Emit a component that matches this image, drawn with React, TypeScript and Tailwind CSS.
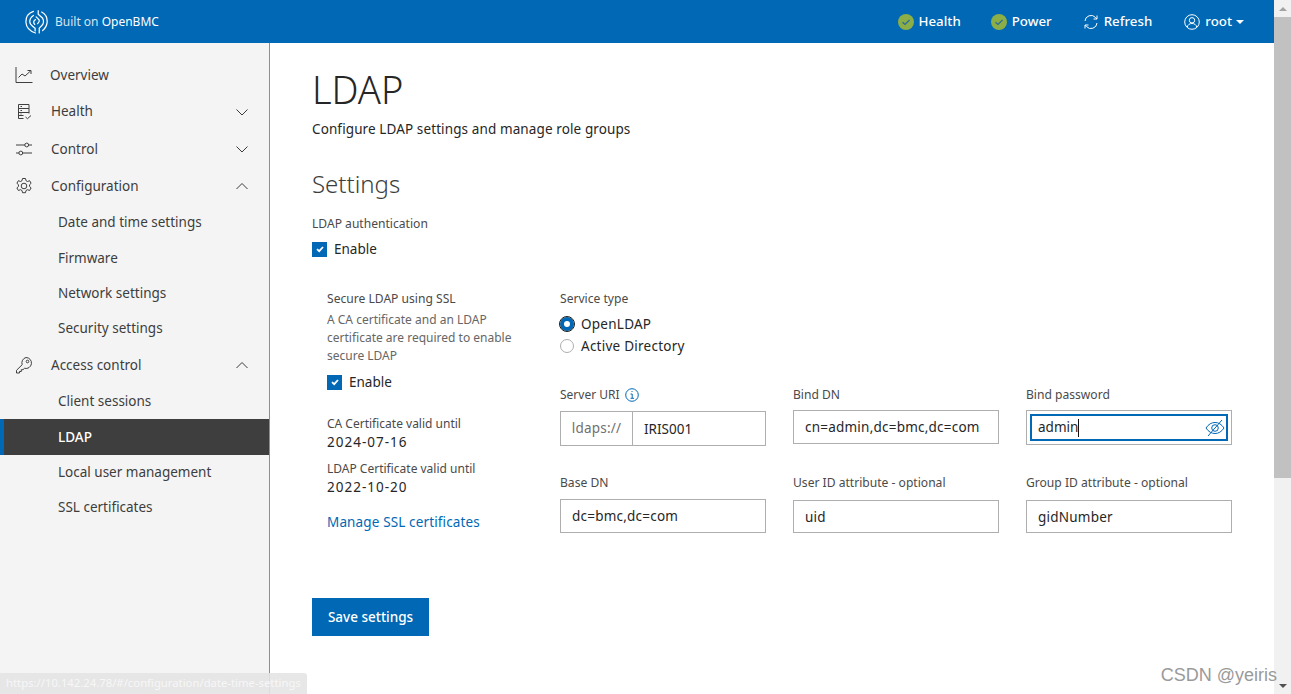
import React from "react";

const font = "font-['Noto_Sans',sans-serif]";

function Chevron({ up }: { up?: boolean }) {
  return (
    <svg width="16" height="16" viewBox="0 0 16 16" fill="none" stroke="#3b3b3b" strokeWidth="1">
      {up ? <path d="M2.500 11 8 5.500l5.500 5.500" /> : <path d="M2.500 5.500 8 11l5.500-5.500" />}
    </svg>
  );
}

const s = { fill: "none", stroke: "#3f3f3f", strokeWidth: 1 };

function IconOverview() {
  return (
    <svg width="18" height="18" viewBox="0 0 18 18" {...s}>
      <path d="M1 1v15.500h16.500" />
      <path d="M3.500 11.500l3.500-3.500 3 2 5.500-5" />
      <path d="M12.500 4.500h3.500v3.500" />
    </svg>
  );
}
function IconHealth() {
  return (
    <svg width="18" height="18" viewBox="0 0 18 18" {...s}>
      <path d="M8.500 15.500H3.500v-14h10.500v9" />
      <path d="M3.500 5.500h10.500M3.500 9.500h10.500M3.500 12.500h5" />
      <path d="M5.500 3.500h1.500M5.500 7.500h1.500M5.500 11h1" />
      <path d="M10.500 14l2 1.700 3.500-3.200" />
    </svg>
  );
}
function IconControl() {
  return (
    <svg width="18" height="18" viewBox="0 0 18 18" {...s}>
      <path d="M1 5h9M13.500 5H17M1 13h3M7.500 13H17" />
      <circle cx="11.700" cy="5" r="1.900" />
      <circle cx="5.800" cy="13" r="1.900" />
    </svg>
  );
}
function IconGear() {
  return (
    <svg width="18" height="18" viewBox="0 0 18 18" {...s}>
      <circle cx="9" cy="9" r="2.800" />
      <path d="M7.500 1.500h3l.5 2.200 1.500.8 2.100-.8 1.500 2.600-1.600 1.500v1.600l1.600 1.500-1.500 2.600-2.100-.8-1.500.8-.5 2.200h-3l-.5-2.200-1.500-.8-2.100.8-1.500-2.600 1.600-1.500V7.700L1.900 6.300l1.500-2.600 2.100.8 1.500-.8z" />
    </svg>
  );
}
function IconKey() {
  return (
    <svg width="18" height="18" viewBox="0 0 18 18" {...s}>
      <path d="M11 1.500a5.500 5.500 0 1 1-1.500 10.800L8 13.700H6.300v1.800H4.500v1.500H1.500v-2.700l5.700-5.600A5.500 5.500 0 0 1 11 1.500z" />
      <circle cx="12.500" cy="5.500" r="1.300" />
    </svg>
  );
}

function Logo() {
  return (
    <svg width="23" height="24" viewBox="76 30 66 70" fill="none" stroke="#fff" strokeWidth="3.600" strokeLinecap="round">
      <path d="M100 34C84 39 78 52 78 65C79 80 90 92 106 97" />
      <path d="M124 36C135 42 141 54 140 66C139 76 134 84 127 90" />
      <path d="M114 32V42L127 54C131 62 130 70 124 76L117 83V97" />
      <path d="M100 46C91 52 88 60 90 68C92 74 98 78 105 83V91" />
      <path d="M106 58C100 61 99 68 104 72" />
      <path d="M108 50L117 59C118 64 116 67 112 70" />
    </svg>
  );
}

function StatusCheck() {
  return (
    <svg width="16" height="16" viewBox="0 0 16 16">
      <circle cx="8" cy="8" r="8" fill="#8bae46" />
      <path d="M4.500 8.200 7 10.500l4.500-4.500" fill="none" stroke="#2b6a9b" strokeWidth="1.200" />
    </svg>
  );
}

function Checkbox() {
  return (
    <span className="flex h-[15px] w-[15px] items-center justify-center bg-[#0068b5]">
      <svg width="10" height="10" viewBox="0 0 10 10" fill="none" stroke="#fff" strokeWidth="1.800">
        <path d="M2 5.200 4.200 7.200 8 3" />
      </svg>
    </span>
  );
}

const rows: { label: string; h: string; icon?: React.ReactNode; chev?: "up" | "down"; active?: boolean; x: string; gap?: string }[] = [
  { label: "Overview", h: "h-[36px]", icon: <IconOverview />, x: "ml-[15px] mr-[19px]", gap: "w-[17px]" },
  { label: "Health", h: "h-[37px]", icon: <IconHealth />, chev: "down", x: "ml-[15px] mr-[19px]" },
  { label: "Control", h: "h-[38px]", icon: <IconControl />, chev: "down", x: "ml-[15px] mr-[19px]" },
  { label: "Configuration", h: "h-[36px]", icon: <IconGear />, chev: "up", x: "ml-[15px] mr-[19px]" },
  { label: "Date and time settings", h: "h-[36px]", x: "ml-[58px]" },
  { label: "Firmware", h: "h-[36px]", x: "ml-[58px]" },
  { label: "Network settings", h: "h-[35px]", x: "ml-[58px]" },
  { label: "Security settings", h: "h-[35px]", x: "ml-[58px]" },
  { label: "Access control", h: "h-[37px] pt-[1px]", icon: <IconKey />, chev: "up", x: "ml-[15px] mr-[19px]" },
  { label: "Client sessions", h: "h-[36px]", x: "ml-[58px]" },
  { label: "LDAP", h: "h-[36px]", active: true, x: "ml-[54px]" },
  { label: "Local user management", h: "h-[35px]", x: "ml-[58px]" },
  { label: "SSL certificates", h: "h-[35px]", x: "ml-[58px]" },
];

function Field({ label, value, h = "h-[34px]", mb = "mb-[7px]" }: { label: string; value: string; h?: string; mb?: string }) {
  return (
    <div>
      <div className={`h-[17px] text-[12.100px] leading-[17px] text-[#4a4a4a] ${mb}`}>{label}</div>
      <div className={`flex items-center border border-[#aeaeae] bg-white pl-[11px] pt-[1px] text-[13.500px] tracking-[0.22px] text-[#262626] ${h}`}>{value}</div>
    </div>
  );
}

export default function App() {
  return (
    <div className={`relative flex h-[694px] w-[1291px] overflow-hidden bg-white ${font}`}>
      <div className="flex h-full w-[1274px] flex-col">
        <header className="flex h-[43px] shrink-0 items-center bg-[#0068b5] text-white">
          <div className="ml-[25px]"><Logo /></div>
          <div className="ml-[7px] text-[12px] text-[#d5e5f2]">Built on <span className="text-white">OpenBMC</span></div>
          <div className="ml-auto flex items-center text-[13.300px] font-medium">
            <div className="flex items-center pt-[1px]">
              <StatusCheck /><span className="ml-[5px]">Health</span>
              <span className="ml-[30px]"><StatusCheck /></span><span className="ml-[5px]">Power</span>
            </div>
            <svg className="ml-[31px]" width="16" height="16" viewBox="0 0 16 16" fill="none" stroke="#fff" strokeWidth="1">
              <path d="M2 7a6 6 0 0 1 10.500-3.500L14 5M14 9a6 6 0 0 1-10.500 3.500L2 11" />
              <path d="M14 1.500V5h-3.500M2 14.500V11h3.500" />
            </svg>
            <span className="ml-[5px]">Refresh</span>
            <svg className="ml-[32px]" width="16" height="16" viewBox="0 0 16 16" fill="none" stroke="#fff" strokeWidth="1">
              <circle cx="8" cy="8" r="7.300" />
              <circle cx="8" cy="6.300" r="2.700" />
              <path d="M3.300 13c.5-2.500 2.500-3.500 4.700-3.500s4.200 1 4.700 3.500" />
            </svg>
            <span className="ml-[5px]">root</span>
            <span className="ml-[4px] h-0 w-0 border-x-[4px] border-t-[4px] border-x-transparent border-t-white" />
            <span className="w-[30px]" />
          </div>
        </header>
        <div className="flex min-h-0 flex-1">
          <nav className="w-[270px] shrink-0 border-r border-[#8f8f8f] bg-[#f4f4f4] pt-[14px] text-[13.500px] text-[#3d3d3d]">
            {rows.map((r) => (
              <div key={r.label} className={`flex items-center ${r.h} ${r.active ? "border-l-[4px] border-[#0068b5] bg-[#3e3e3e] font-medium text-white" : ""}`}>
                <div className={`flex flex-1 items-center ${r.x}`}>
                  {r.icon}
                  {r.icon && <span className={r.gap ?? "w-[18px]"} />}
                  <span>{r.label}</span>
                  {r.chev && <span className="ml-auto"><Chevron up={r.chev === "up"} /></span>}
                </div>
              </div>
            ))}
          </nav>
          <main className="min-w-0 flex-1 pl-[42px] pt-[21px]">
            <h1 className="h-[50px] text-[38px] font-light leading-[50px] text-[#262626]">LDAP</h1>
            <p className="mt-[6px] text-[13.500px] leading-[18px] tracking-[0.11px] text-[#262626]">Configure LDAP settings and manage role groups</p>
            <h2 className="mt-[29px] text-[24px] font-light leading-[33px] text-[#3d3d3d]">Settings</h2>
            <div className="mt-[15px] text-[12.100px] leading-[17px] text-[#4a4a4a]">LDAP authentication</div>
            <label className="mt-[8px] flex h-[18px] items-center gap-[7px] text-[13.500px] text-[#262626]"><Checkbox />Enable</label>
            <div className="mt-[32px] flex">
              <div className="ml-[15px] w-[233px]">
                <div className="text-[12.100px] leading-[17px] text-[#4a4a4a]">Secure LDAP using SSL</div>
                <div className="mt-[4px] w-[200px] text-[12px] leading-[18px] text-[#666]">A CA certificate and an LDAP certificate are required to enable secure LDAP</div>
                <label className="mt-[8px] flex h-[18px] items-center gap-[7px] text-[13.500px] text-[#262626]"><Checkbox />Enable</label>
                <div className="mt-[24px] text-[12px] leading-[17px] text-[#4a4a4a]">CA Certificate valid until</div>
                <div className="mt-[1px] text-[13.500px] leading-[18px] tracking-[1px] text-[#262626]">2024-07-16</div>
                <div className="mt-[9px] text-[12px] leading-[17px] text-[#4a4a4a]">LDAP Certificate valid until</div>
                <div className="mt-[1px] text-[13.500px] leading-[18px] tracking-[1px] text-[#262626]">2022-10-20</div>
                <div className="mt-[17px] text-[13.500px] leading-[18px] tracking-[0.14px] text-[#0068b5]">Manage SSL certificates</div>
              </div>
              <div className="w-[672px]">
                <div className="text-[12.100px] leading-[17px] text-[#4a4a4a]">Service type</div>
                <div className="mt-[8px] flex h-[18px] items-center gap-[7px] text-[13.500px] tracking-[0.25px] text-[#262626]">
                  <span className="h-[14px] w-[14px] rounded-full border-[4px] border-[#0068b5] bg-white outline outline-1 outline-[#1a1a1a]" />OpenLDAP
                </div>
                <div className="mt-[4px] flex h-[18px] items-center gap-[7px] text-[13.500px] tracking-[0.25px] text-[#262626]">
                  <span className="h-[14px] w-[14px] rounded-full border border-[#aeaeae] bg-white" />Active Directory
                </div>
                <div className="mt-[31px] grid grid-cols-3 gap-x-[27px]">
                  <div>
                    <div className="mb-[8px] flex h-[17px] items-center gap-[5px] text-[12px] leading-[17px] text-[#4a4a4a]">Server URI
                      <svg width="14" height="14" viewBox="0 0 14 14" fill="none" stroke="#0068b5" strokeWidth="1">
                        <circle cx="7" cy="7" r="6.300" />
                        <path d="M5.500 6H7.200v4M5.500 10.300h3.500M6.500 3.500h1" />
                      </svg>
                    </div>
                    <div className="flex h-[35px] items-center border border-[#aeaeae] pt-[1px] text-[13.500px] text-[#262626]">
                      <span className="-mt-[1px] flex h-[33px] w-[72px] items-center justify-center border-r border-[#aeaeae] tracking-[0.2px] text-[#707070]">ldaps://</span>
                      <span className="ml-[11px]">IRIS001</span>
                    </div>
                  </div>
                  <Field label="Bind DN" value="cn=admin,dc=bmc,dc=com" />
                  <div>
                    <div className="mb-[7px] h-[17px] text-[12.100px] leading-[17px] text-[#4a4a4a]">Bind password</div>
                    <div className="flex h-[35px] items-center border border-[#aeaeae] p-[3px]">
                      <div className="flex h-full w-full items-center border-2 border-[#0068b5] pl-[6px] text-[13.500px] text-[#262626]">
                        admin<span className="h-[18px] w-px bg-[#111]" />
                        <svg className="ml-auto mr-[1px]" width="20" height="18" viewBox="0 0 20 18" fill="none" stroke="#0068b5" strokeWidth="1">
                          <path d="M1 9c2.500-3.800 5.500-5.500 9-5.500s6.500 1.700 9 5.500c-2.500 3.800-5.500 5.500-9 5.500S3.500 12.800 1 9z" />
                          <circle cx="10" cy="9" r="3.300" />
                          <path d="M17 1 3 17" />
                        </svg>
                      </div>
                    </div>
                  </div>
                </div>
                <div className="mt-[28px] grid grid-cols-3 gap-x-[27px]">
                  <Field label="Base DN" value="dc=bmc,dc=com" mb="mb-[8px]" />
                  <Field label="User ID attribute - optional" value="uid" mb="mb-[9px]" h="h-[33px]" />
                  <Field label="Group ID attribute - optional" value="gidNumber" mb="mb-[9px]" h="h-[33px]" />
                </div>
              </div>
            </div>
            <button className="mt-[65px] flex h-[38px] w-[117px] items-center justify-center bg-[#0068b5] text-[13.500px] font-medium text-white">Save settings</button>
          </main>
        </div>
      </div>
      <div className="flex h-full w-[17px] flex-col bg-[#f1f1f1]">
        <div className="flex h-[17px] items-center justify-center">
          <span className="h-0 w-0 border-x-[4px] border-b-[4px] border-x-transparent border-b-[#a3a3a3]" />
        </div>
        <div className="h-[461px] bg-[#c1c1c1]" />
        <div className="mt-auto flex h-[17px] items-center justify-center">
          <span className="h-0 w-0 border-x-[4px] border-t-[4px] border-x-transparent border-t-[#505050]" />
        </div>
      </div>
      <div className="absolute bottom-0 left-0 flex h-[21px] w-[307px] items-center rounded-tr-[3px] bg-[#e4e4e4]/90 pl-[6px] text-[11.300px] text-[#f7f7f7]">https://10.142.24.78/#/configuration/date-time-settings</div>
      <div className="absolute bottom-[5px] right-[14px] font-['Liberation_Sans',sans-serif] text-[18px] text-[#9a9a9a]">CSDN @yeiris</div>
    </div>
  );
}
